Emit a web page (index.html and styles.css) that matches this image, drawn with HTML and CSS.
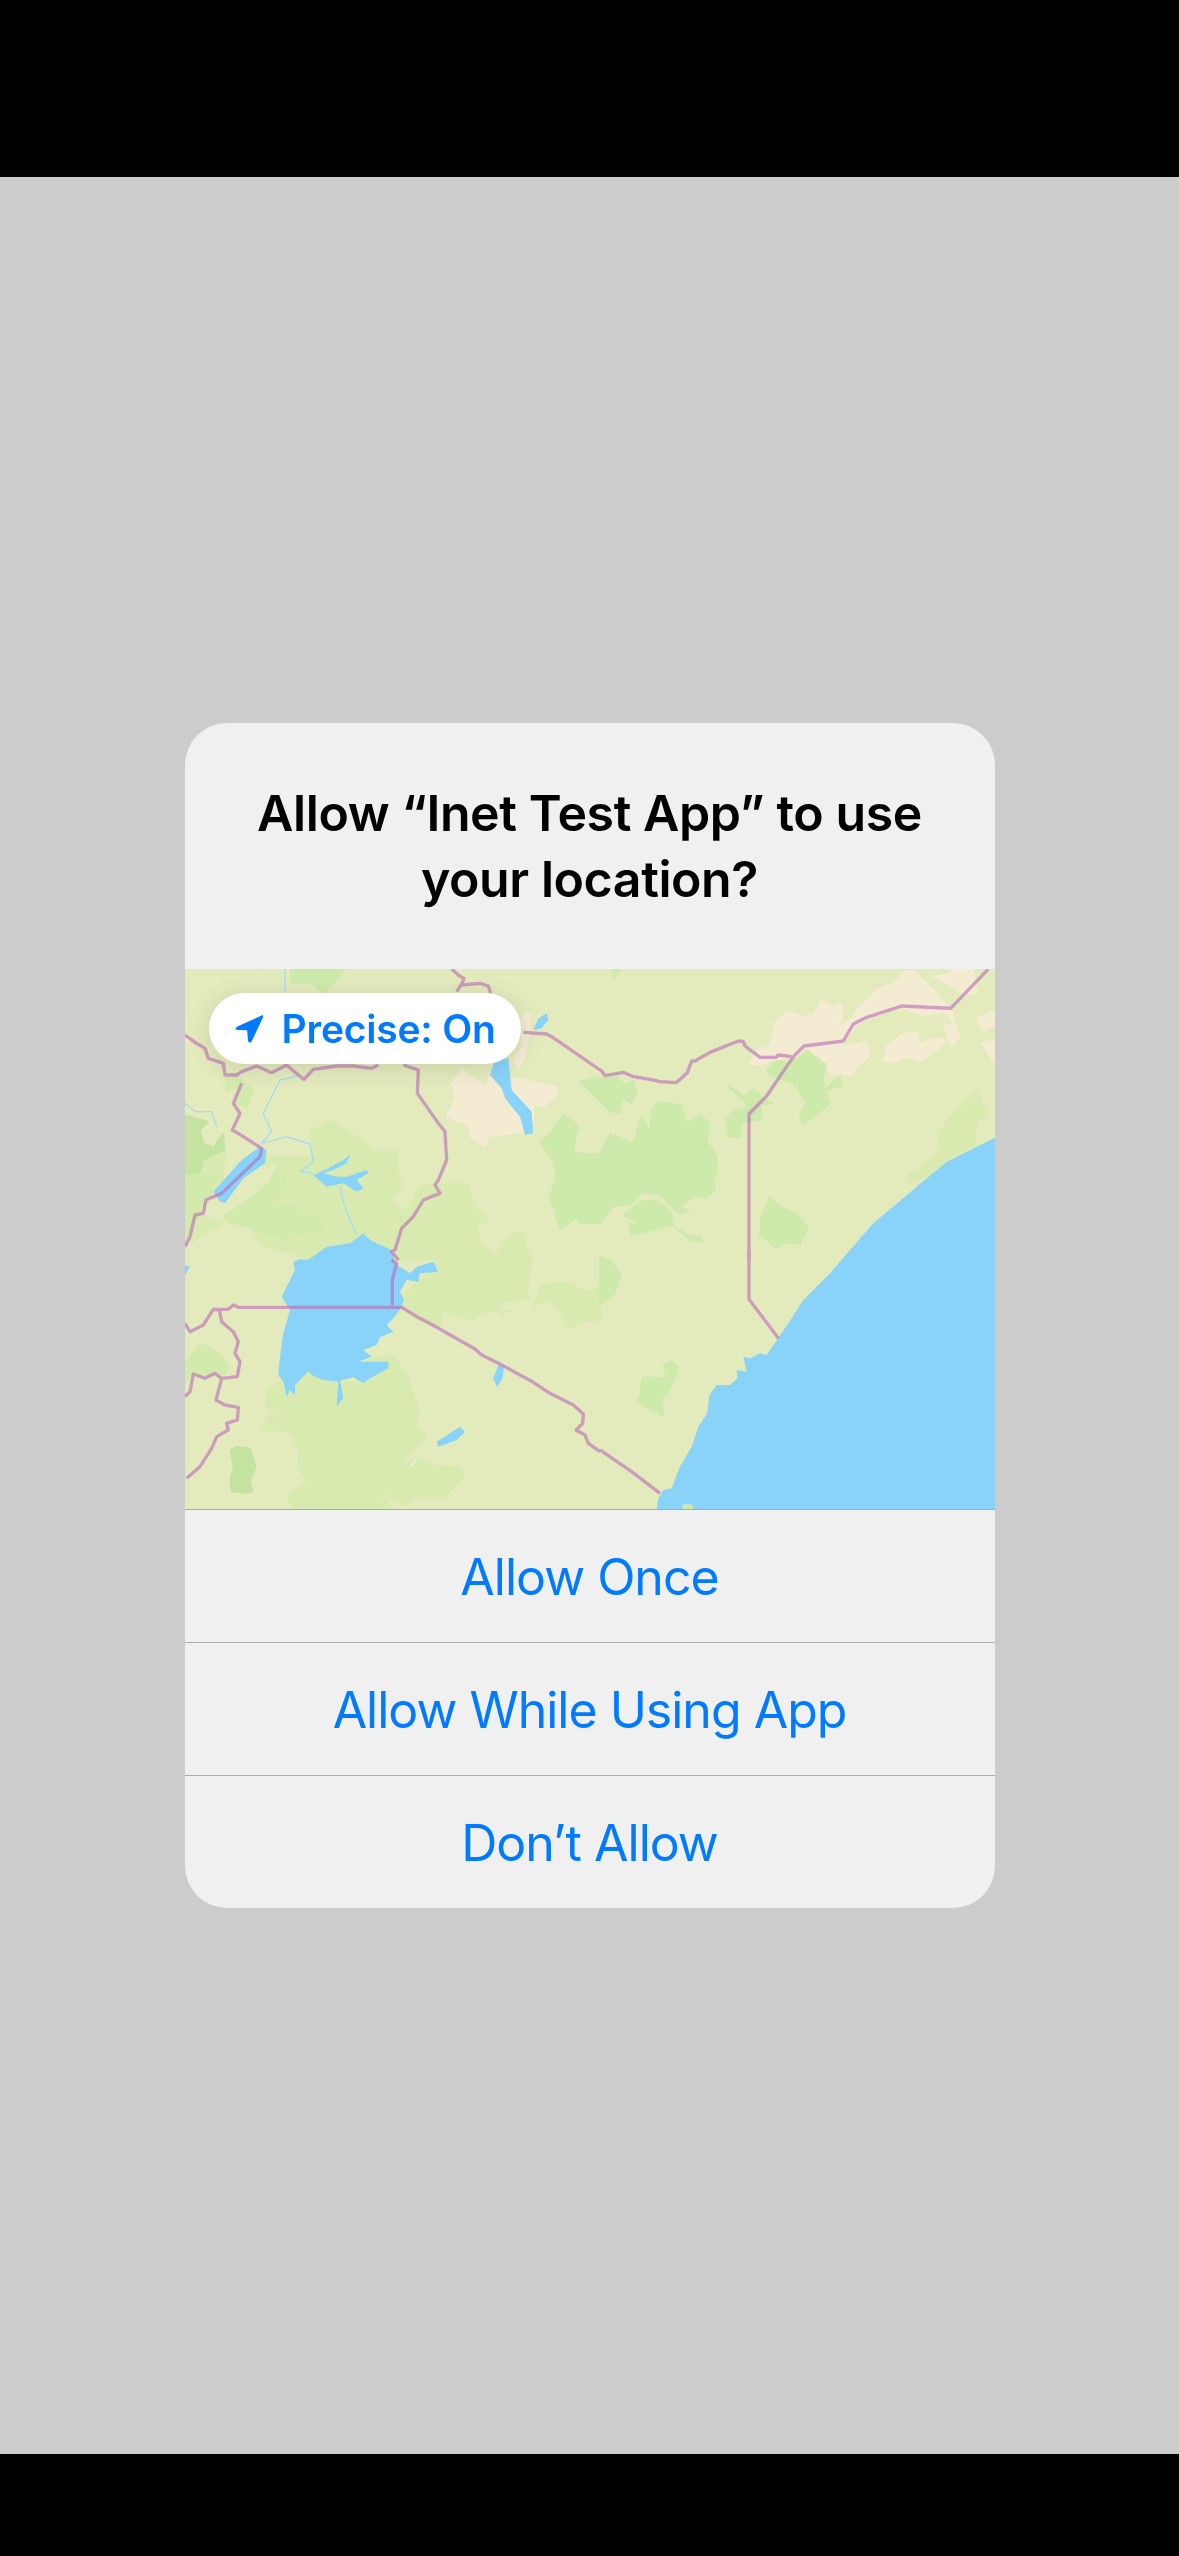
FILE: index.html
```html
<!DOCTYPE html>
<html lang="en">
<head>
    <meta charset="UTF-8">
    <title>Location permission</title>
    <link rel="stylesheet" href="styles.css">
</head>
<body>
    <div class="black-bar top-bar"></div>
    <main class="screen">
        <div class="alert">
            <div class="alert-header">
                <h2>Allow “Inet Test App” to use your location?</h2>
            </div>
            <div class="map">
                <svg class="map-svg" viewBox="0 0 810 540" width="810" height="540">
                    <rect class="land" width="810" height="540"/>

                    <!-- top left part of the map -->
                    <g transform="translate(-5 -9) scale(.33333)">
                        <polygon class="light" points="390,515 450,480 530,530 590,575 650,570 655,640 668,670 635,725 680,750 720,680 760,670 780,700 730,720 700,770 665,810 640,900 380,900 340,880 250,860 210,800 150,790 130,770 230,700 265,670 300,610 260,620 240,590 395,590"/>
                        <polygon class="light" points="730,720 760,670 860,670 890,750 930,780 890,795 900,850 950,880 1000,815 1030,820 1050,900 650,900 665,810 700,770"/>
                        <polygon class="light" points="15,650 70,600 135,570 130,660 80,720 45,765 130,790 30,850 15,860"/>
                        <polygon class="light" points="185,370 220,390 200,440 160,430"/>
                        <polygon class="mid" points="265,670 300,610 320,680 280,740 340,730 365,760 420,770 435,810 350,820 310,840 210,800 150,790 130,770 230,700"/>
                        <polygon class="green" points="330,27 495,27 470,60 430,98 395,70 335,68"/>
                        <polygon class="green-dark" points="15,465 85,485 60,510 70,550 100,560 130,520 135,570 70,600 60,640 15,650"/>
                        <polygon class="mid" points="15,650 65,640 120,640 80,720 60,760 30,830 15,860"/>
                        <polygon class="mid" points="135,350 170,345 220,390 200,440 160,430 180,380 140,395"/>
                        <polygon class="beige" points="815,370 845,330 920,380 930,340 990,350 1130,380 1130,405 1090,440 1060,430 1060,520 1000,520 925,530 915,560 870,530 865,495 800,470 825,420"/>
                        <polygon class="beige" points="1030,160 1050,160 1050,215 1030,300 1015,325 1000,300 1028,260"/>
                        <polygon class="green" points="1200,365 1260,350 1260,425 1225,390"/>
                        <polygon class="green" points="1080,545 1110,520 1150,465 1195,495 1180,570 1200,580 1260,580 1260,790 1200,790 1190,770 1140,810 1110,710 1130,640 1110,590"/>
                        <polygon class="water" points="945,300 985,295 995,390 1055,455 1060,520 1035,525 1020,470 975,415 965,385 930,345"/>
                        <polygon class="water" points="1060,210 1075,175 1100,160 1105,180 1085,205"/>
                        <polygon class="water" points="100,695 185,600 240,560 260,570 255,610 190,655 135,730 120,725"/>
                        <polygon class="water" points="400,645 445,625 490,600 510,585 500,610 460,630 430,640 470,650 500,650 560,630 565,640 530,660 550,685 530,695 490,670 440,680"/>
                        <polyline class="river" points="315,27 315,95"/>
                        <polyline class="river" points="350,348 300,360 250,460 275,515 245,550 320,530 390,552 400,605 362,635 400,640"/>
                        <polyline class="river" points="15,430 45,455 95,455 110,500"/>
                        <polyline class="river" points="480,680 495,745 530,825"/>
                    </g>

                    <!-- top right part of the map -->
                    <g transform="translate(415 -9) scale(.33333)">
                        <polygon class="green" points="35,27 65,27 45,55"/>
                        <polygon class="green" points="0,355 50,350 75,375 100,360 110,395 95,430 65,420 60,460 30,455 0,425"/>
                        <polygon class="green" points="0,580 30,520 100,550 125,465 150,520 155,450 175,425 245,435 260,490 300,465 330,490 320,540 350,590 350,635 340,660 345,690 320,715 285,708 240,740 270,755 235,760 180,705 130,697 90,735 40,738 0,790"/>
                        <polygon class="green" points="385,380 410,390 430,410 460,385 490,415 520,430 485,435 485,480 425,490 420,532 385,530 378,480 400,450 440,445 440,430"/>
                        <polygon class="green" points="500,330 530,300 570,310 590,285 625,265 680,310 670,360 675,390 720,345 725,380 675,390 690,430 650,465 610,490 600,460 620,430 580,370 505,345"/>
                        <polygon class="beige" points="445,310 480,265 510,260 525,190 560,155 610,170 640,165 665,120 700,140 725,130 728,175 705,200 750,180 770,150 800,120 830,90 890,65 910,35 940,30 1000,90 1050,145 1080,230 1055,260 1030,200 1060,190 1040,160 960,165 900,140 830,165 770,195 720,260 800,245 805,290 770,320 755,345 690,340 680,310 620,265 590,290 520,300 480,315"/>
                        <polygon class="beige" points="850,300 860,260 910,220 950,215 960,250 1005,235 1040,240 1010,270 960,305 920,290 870,310"/>
                        <polygon class="beige" points="1000,50 1050,40 1060,27 1120,27 1130,100 1085,100 1050,75"/>
                        <polygon class="beige" points="1130,175 1185,150 1185,195 1150,215"/>
                        <polygon class="beige" points="1145,250 1185,240 1185,310 1165,280"/>
                        <polygon class="light" points="925,645 1020,580 1015,520 1060,460 1130,390 1160,460 1130,490 1125,560 1050,590 980,650 925,670"/>
                        <polygon class="green" points="70,765 130,720 180,725 215,760 218,795 270,830 300,825 305,845 270,840 218,795 95,825 85,790 125,795"/>
                        <polygon class="green" points="480,780 510,710 540,740 590,760 625,805 600,850 560,850 525,865 490,830 475,830 485,795"/>
                    </g>

                    <!-- bottom left part of the map -->
                    <g transform="translate(-5 281) scale(.33333)">
                        <polygon class="light" points="260,415 300,395 320,440 345,410 385,370 470,395 545,400 625,355 530,340 630,310 680,370 720,490 705,520 740,560 680,620 640,670 590,720 640,777 340,777 325,740 380,690 350,650 360,600 320,540 245,540 260,500 300,490 255,470"/>
                        <polygon class="light" points="672,130 720,90 780,30 950,30 1050,0 1055,40 1040,130 1050,145 1000,155 970,150 960,195 1000,180 900,190 880,215 790,185 780,230 700,205 665,172"/>
                        <polygon class="light" points="1060,170 1085,105 1150,95 1230,125 1260,110 1260,210 1210,215 1175,235 1150,205 1110,150"/>
                        <polygon class="light" points="600,715 640,660 710,620 770,645 830,650 855,670 800,740 700,740 680,770 625,740 590,720"/>
                        <polygon class="mid" points="15,340 60,280 105,300 150,350 130,375 105,370 75,385 40,372 15,400"/>
                        <polygon class="green-dark" points="150,600 170,590 210,595 228,650 210,695 218,725 200,730 155,725 150,685 160,650"/>
                        <polygon class="islet" points="685,650 715,618 700,645"/>
                        <polygon class="water" points="340,35 360,28 385,30 440,-10 510,-20 550,-50 570,-30 590,-20 635,0 645,40 690,70 710,50 760,35 775,65 720,70 715,95 680,90 660,125 672,150 665,172 640,205 620,225 640,245 600,262 590,285 550,300 575,320 535,335 625,335 625,355 570,385 550,400 520,382 480,392 490,445 470,470 475,395 430,390 400,378 385,365 345,405 345,435 330,420 320,440 310,395 295,375 300,320 310,250 330,180 305,140 330,90 345,60"/>
                        <polygon class="water" points="940,385 955,345 972,350 968,385 950,410"/>
                        <polygon class="water" points="770,575 840,530 855,545 830,570 775,590"/>
                        <polygon class="water" points="15,45 30,50 15,75"/>
                    </g>

                    <!-- bottom right part of the map -->
                    <g transform="translate(415 281) scale(.33333)">
                        <polygon class="green" points="0,20 30,30 62,75 45,130 0,165"/>
                        <polygon class="green" points="130,380 200,385 190,345 215,333 232,350 225,385 200,435 185,445 190,500 160,480 135,470 110,455 125,430 120,410"/>
                        <polygon class="water" points="1185,-337 1130,-310 1040,-265 950,-190 820,-80 750,0 690,70 610,150 575,205 500,315 480,310 450,325 430,320 440,365 410,360 412,385 390,405 350,405 328,435 322,490 295,530 275,590 240,650 215,715 190,720 175,745 170,777 1185,777"/>
                        <polygon class="green" points="250,765 275,765 278,777 250,777"/>
                    </g>

                    <!-- borders, one group so the overlaps stay flat -->
                    <g class="borders">
                        <g transform="translate(-5 -9) scale(.33333)">
                            <polyline points="815,27 835,45 852,55 845,72 830,95"/>
                            <polyline points="845,75 900,70 925,78 932,100"/>
                            <polyline points="1030,217 1100,222 1115,230 1260,330"/>
                            <polyline points="15,225 50,250 75,265 85,295 130,310 135,345 170,345 185,335 230,318 275,338 320,315 355,345 372,358 400,328 470,318 520,318 575,325 595,315"/>
                            <polyline points="670,315 715,330 712,400 740,440 775,490 795,515 800,600 775,660 765,675 780,700 730,720 700,770 665,805 645,870 635,875 655,900"/>
                            <polyline points="185,370 160,430 180,460 157,510 190,530 245,565 240,590 125,700 95,712 78,720 70,760 45,765 30,830 15,860"/>
                        </g>
                        <g transform="translate(415 -9) scale(.33333)">
                            <polyline points="0,327 15,347 70,337 100,350 150,358 180,365 228,368 232,365 262,338 275,303 285,303 330,277 415,243 430,245 435,258 480,292 528,292 535,285 575,290"/>
                            <polyline points="1165,27 1052,145 905,138 800,172 760,192 730,243 612,258 580,290 500,408 447,462 447,900"/>
                        </g>
                        <g transform="translate(-5 281) scale(.33333)">
                            <polyline points="635,30 650,40 637,90 637,165"/>
                            <polyline points="100,178 145,178 160,165 175,172 665,172 720,205 770,232 885,297 905,315 960,342 1020,375 1060,397 1110,430 1180,465 1210,492 1208,520 1188,540 1215,555 1225,580 1260,605"/>
                            <polyline points="15,220 30,245 70,225 100,178 118,180 125,215 160,245 175,275 165,310 180,335 172,380 125,385 105,370 75,385 40,372 30,425 15,440"/>
                            <polyline points="125,385 108,450 135,465 175,472 172,510 140,520 145,540 110,560 95,595 60,650 20,685"/>
                        </g>
                        <g transform="translate(415 281) scale(.33333)">
                            <polyline points="447,0 447,148 490,205 535,265"/>
                            <polyline points="0,600 95,665 180,730"/>
                        </g>
                    </g>
                </svg>
                <div class="precise-pill">
                    <svg class="arrow" viewBox="0 0 30 30" width="30" height="30">
                        <path d="M28.3 1.2 L3.4 12.4 Q-.4 15.2 3.4 15.9 L13.1 16.3 L14 27 Q15.3 29.8 17.4 27.9 L29 3.2 Q29.6 .5 28.3 1.2Z"/>
                    </svg>
                    <span>Precise: On</span>
                </div>
            </div>
            <button class="alert-btn">Allow Once</button>
            <button class="alert-btn">Allow While Using App</button>
            <button class="alert-btn">Don’t Allow</button>
        </div>
    </main>
    <div class="black-bar bottom-bar"></div>
</body>
</html>
```

FILE: styles.css
```css
body {
    margin: 0;
    height: 2556px;
    display: flex;
    flex-direction: column;
    background: #cccccc;
    font-family: Inter, 'Liberation Sans', sans-serif;
}

.black-bar {
    background: #000000;
}

.top-bar {
    height: 177px;
}

.bottom-bar {
    height: 102px;
}

.screen {
    flex: 1;
    padding-top: 546px;
    display: flex;
    justify-content: center;
    align-items: flex-start;
}

.alert {
    width: 810px;
    background: #f0f0f0;
    border-radius: 42px;
    overflow: hidden;
}

.alert-header {
    height: 246px;
    box-sizing: border-box;
    padding: 57px 40px 0;
}

.alert-header h2 {
    margin: 0;
    font-size: 50px;
    font-weight: 600;
    line-height: 66px;
    letter-spacing: -0.4px;
    text-align: center;
    color: #000000;
}

.map {
    position: relative;
    height: 540px;
}

.map-svg {
    display: block;
}

.land { fill: #e3ebbd; }
.light { fill: #d9eab0; stroke: #d9eab0; stroke-width: 4; stroke-linejoin: round; }
.mid { fill: #d3eaad; stroke: #d3eaad; stroke-width: 4; stroke-linejoin: round; }
.green { fill: #cde9ab; stroke: #cde9ab; stroke-width: 4; stroke-linejoin: round; }
.green-dark { fill: #c5e3a0; stroke: #c5e3a0; stroke-width: 4; stroke-linejoin: round; }
.beige { fill: #f3ecd3; stroke: #f3ecd3; stroke-width: 4; stroke-linejoin: round; }
.water { fill: #8ad3f8; }
.islet { fill: #ececec; }

.river {
    fill: none;
    stroke: #a4dcf5;
    stroke-width: 4;
}

.borders {
    opacity: 0.6;
}

.borders polyline {
    fill: none;
    stroke: #bc69ba;
    stroke-width: 10;
    stroke-linejoin: round;
}

.precise-pill {
    position: absolute;
    top: 24px;
    left: 24px;
    height: 71px;
    padding: 0 25px;
    display: flex;
    align-items: center;
    gap: 18px;
    background: #ffffff;
    border-radius: 36px;
    box-shadow: 0 4px 24px rgba(0,0,0,0.12);
    font-size: 39px;
    font-weight: 600;
    letter-spacing: -0.2px;
    color: #007aff;
}

.arrow {
    fill: #007aff;
}

.alert-btn {
    display: block;
    width: 100%;
    height: 133px;
    padding: 2px 0 0;
    border: none;
    border-top: 1.5px solid #ababab;
    background: none;
    font-family: inherit;
    font-size: 50px;
    letter-spacing: -1px;
    color: #007aff;
}
```
